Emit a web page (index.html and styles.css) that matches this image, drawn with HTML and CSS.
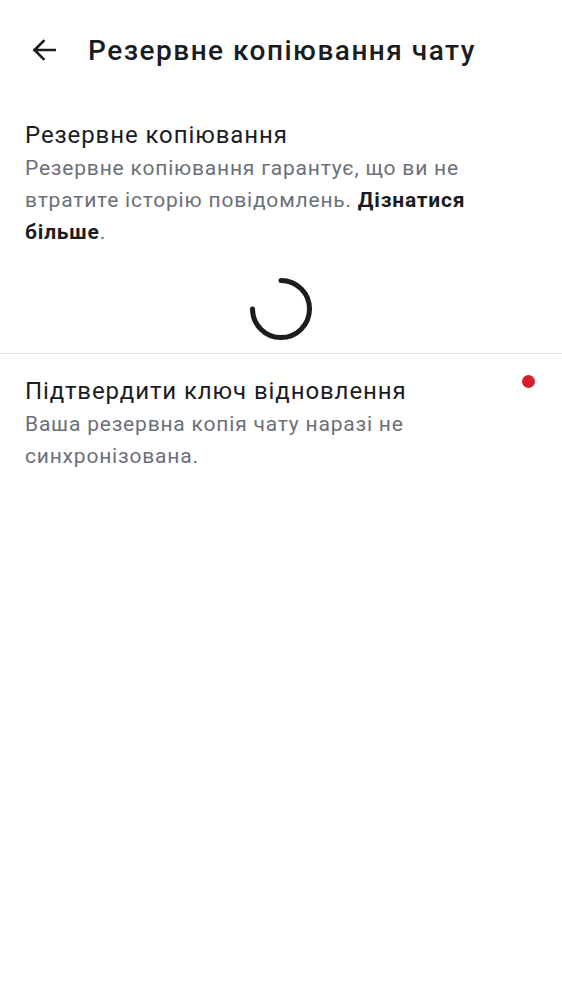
FILE: index.html
```html
<!DOCTYPE html>
<html lang="uk">
<head>
<meta charset="utf-8">
<link rel="stylesheet" href="styles.css">
</head>
<body>
<div class="app">
  <header class="topbar">
    <button class="back" aria-label="Назад">
      <svg width="24" height="22" viewBox="0 0 24 22"><path d="M23 11H2.5M11.5 2L2.5 11l9 9" fill="none" stroke="#1b1c1f" stroke-width="2.6" stroke-linecap="square"/></svg>
    </button>
    <h1 class="title">Резервне копіювання чату</h1>
  </header>

  <section class="item">
    <div class="item-title">Резервне копіювання</div>
    <div class="item-sub">Резервне копіювання гарантує, що ви не втратите історію повідомлень. <b>Дізнатися більше</b>.</div>
  </section>

  <div class="spinner-wrap">
    <svg class="spinner" width="64" height="64" viewBox="0 0 64 64"><path d="M32 3.5 A28.5 28.5 0 1 1 3.5 32" fill="none" stroke="#1b1c1f" stroke-width="5" stroke-linecap="round"/></svg>
  </div>

  <div class="divider"></div>

  <section class="item item-2">
    <div class="item-title">Підтвердити ключ відновлення</div>
    <div class="item-sub">Ваша резервна копія чату наразі не синхронізована.</div>
    <span class="dot"></span>
  </section>
</div>
</body>
</html>
```

FILE: styles.css
```css
* { box-sizing: border-box; }
html, body { margin: 0; padding: 0; background: #fff; }
body { font-family: Roboto, "Noto Sans", sans-serif; color: #1b1c1f; }
.app { width: 562px; min-height: 1000px; }
.topbar { height: 100px; display: flex; align-items: center; padding-left: 32px; }
.back { border: 0; background: none; padding: 0; width: 24px; height: 22px; display: flex; margin-right: 32px; }
.title { margin: 0; font-size: 28px; font-weight: 500; letter-spacing: 1.5px; color: #1b1c1f; }
.item { position: relative; padding: 0 70px 0 25px; }
.item:first-of-type { padding-top: 19px; }
.item-title { font-size: 24px; line-height: 32px; letter-spacing: 0.9px; color: #1b1c1f; }
.item-sub { font-size: 21px; line-height: 32px; letter-spacing: 0.8px; color: #6b7079; padding-top: 1px; }
.item-sub b { color: #1b1c1f; font-weight: 700; }
.spinner-wrap { display: flex; justify-content: center; padding-top: 29px; padding-left: 0; }
.spinner { display: block; }
.divider { height: 1px; background: #e4e4e6; margin-top: 12px; }
.item-2 { padding-top: 21px; }
.dot { position: absolute; right: 27px; top: 21px; width: 13px; height: 13px; border-radius: 50%; background: #d61f2c; }
```
